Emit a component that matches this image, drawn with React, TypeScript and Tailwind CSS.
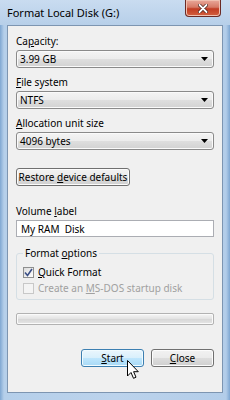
import React from "react";

const font = { fontFamily: '"Segoe UI", "Noto Sans", "Open Sans", sans-serif' };

function U({ children }: { children: React.ReactNode }) {
  return <span className="underline underline-offset-[1px] decoration-[1px]">{children}</span>;
}

function Combo({ value }: { value: string }) {
  return (
    <div className="h-[18px] w-full rounded-[3px] border border-[#8a8a8a] bg-[linear-gradient(#f4f4f4_0%,#ececec_48%,#dedede_52%,#d2d2d2_100%)] shadow-[inset_0_0_0_1px_#fafafa] flex items-center justify-between pl-[3px] pr-[5px] text-[10px] text-black leading-none">
      <span>{value}</span>
      <svg width="7" height="4" viewBox="0 0 7 4"><path d="M0 0H7L3.5 4Z" fill="#000" /></svg>
    </div>
  );
}

function Btn({ children, w, hot }: { children: React.ReactNode; w: string; hot?: boolean }) {
  return (
    <div
      className={
        "h-[18px] rounded-[3px] border flex items-center justify-center text-[10px] text-black leading-none " +
        w +
        (hot
          ? " border-[#3c7fb1] bg-[linear-gradient(#eaf6fd_0%,#d9f0fc_48%,#bee6fd_52%,#a7d9f5_100%)] shadow-[inset_0_0_0_1px_#f0fbff]"
          : " border-[#707070] bg-[linear-gradient(#f2f2f2_0%,#ebebeb_48%,#dddddd_52%,#cfcfcf_100%)] shadow-[inset_0_0_0_1px_#fcfcfc]")
      }
    >
      <span>{children}</span>
    </div>
  );
}

function Check({ checked, disabled }: { checked?: boolean; disabled?: boolean }) {
  return (
    <div
      className={
        "w-[11px] h-[11px] border flex items-center justify-center " +
        (disabled
          ? "border-[#c8c8c8] bg-[#f4f4f4]"
          : "border-[#8e8f8f] bg-[linear-gradient(135deg,#dcdcdc,#ffffff)]")
      }
    >
      {checked && (
        <svg width="9" height="9" viewBox="0 0 9 9">
          <path d="M1 4.5L3.5 7.5L8 1" stroke="#3b4f86" strokeWidth="1.6" fill="none" />
        </svg>
      )}
    </div>
  );
}

export default function App() {
  return (
    <div
      style={font}
      className="w-[230px] h-[400px] flex flex-col overflow-hidden bg-[linear-gradient(90deg,#7fa7d2_0px,#b5cfea_4px,#bcd3ec_50%,#b3cde9_226px,#7fa7d2_230px)]"
    >
      {/* title bar */}
      <div className="h-[25px] shrink-0 flex items-start justify-between bg-[linear-gradient(#c9dcf0,#b7cfe9)]">
        <div className="pl-[7px] pt-[6px] text-[11px] leading-[14px] text-black">Format Local Disk (G:)</div>
        <div className="mr-[9px] w-[36px] h-[17px] rounded-b-[4px] border border-t-0 border-[#6b2a25] bg-[linear-gradient(#e9a99b_0%,#d67a66_45%,#c23d24_55%,#d3603f_100%)] shadow-[inset_0_0_0_1px_#f0c0b0] flex items-center justify-center">
          <svg width="10" height="9" viewBox="0 0 10 9">
            <path d="M1.5 1L8.5 8M8.5 1L1.5 8" stroke="#3a1510" strokeWidth="3.2" strokeLinecap="round" />
            <path d="M1.5 1L8.5 8M8.5 1L1.5 8" stroke="#ffffff" strokeWidth="1.9" strokeLinecap="round" />
          </svg>
        </div>
      </div>

      {/* client area */}
      <div className="mx-[7px] mb-[7px] flex-1 border border-[#7d95b1] bg-[#f0f0f0] flex flex-col px-[8px] pt-[8px] text-[10px] text-black leading-[14px]">
        <div>Ca<U>p</U>acity:</div>
        <div className="mt-[2px]"><Combo value="3.99 GB" /></div>

        <div className="mt-[7px]"><U>F</U>ile system</div>
        <div className="mt-[2px]"><Combo value="NTFS" /></div>

        <div className="mt-[7px]"><U>A</U>llocation unit size</div>
        <div className="mt-[2px]"><Combo value="4096 bytes" /></div>

        <div className="mt-[18px] flex">
          <Btn w="w-[114px]">Restore <U>d</U>evice defaults</Btn>
        </div>

        <div className="mt-[18px]">Volume <U>l</U>abel</div>
        <div className="mt-[2px] h-[17px] border border-[#abadb3] bg-white flex items-center pl-[4px] leading-none">My RAM&nbsp; Disk</div>

        {/* group box */}
        <div className="mt-[16px] relative h-[47px] rounded-[3px] border border-[#d5dfe5] flex flex-col pl-[6px] pt-[12px] gap-[4px]">
          <div className="absolute left-[6px] top-[-8px] bg-[#f0f0f0] px-[2px] leading-[14px]">Format <U>o</U>ptions</div>
          <div className="flex items-center gap-[4px] leading-[12px]">
            <Check checked />
            <span><U>Q</U>uick Format</span>
          </div>
          <div className="flex items-center gap-[4px] leading-[12px] text-[#a0a0a0]">
            <Check disabled />
            <span>Create an <U>M</U>S-DOS startup disk</span>
          </div>
        </div>

        {/* progress */}
        <div className="mt-[13px] h-[12px] rounded-[2px] border border-[#b2b2b2] bg-[linear-gradient(#f6f6f6_0%,#e4e4e4_45%,#d8d8d8_55%,#e6e6e6_100%)] shadow-[inset_0_0_0_1px_#fafafa]" />

        <div className="mt-[24px] flex justify-end gap-[7px] relative">
          <Btn w="w-[63px]" hot><U>S</U>tart</Btn>
          <Btn w="w-[63px]"><U>C</U>lose</Btn>
          <svg className="absolute left-[111px] top-[11px]" width="12" height="19" viewBox="0 0 12 19">
            <path d="M0.5 0.5V16L4 12.5L6.5 18.3L9 17.2L6.6 11.7H11.3Z" fill="#fff" stroke="#000" strokeWidth="1" strokeLinejoin="round" />
          </svg>
        </div>
      </div>
    </div>
  );
}
